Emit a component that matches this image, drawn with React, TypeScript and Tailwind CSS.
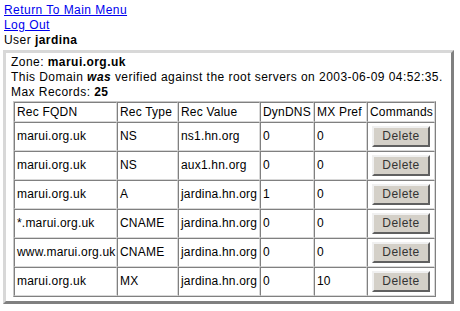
import React from "react";

const rows = [
  ["marui.org.uk", "NS", "ns1.hn.org", "0", "0"],
  ["marui.org.uk", "NS", "aux1.hn.org", "0", "0"],
  ["marui.org.uk", "A", "jardina.hn.org", "1", "0"],
  ["*.marui.org.uk", "CNAME", "jardina.hn.org", "0", "0"],
  ["www.marui.org.uk", "CNAME", "jardina.hn.org", "0", "0"],
  ["marui.org.uk", "MX", "jardina.hn.org", "0", "10"],
];

const widths = ["w-[103px]", "w-[61px]", "w-[82px]", "w-[54px]", "w-[53px]", "w-[68px]"];

const cell =
  "border border-t-[#808080] border-l-[#808080] border-r-[#d8d8d8] border-b-[#d8d8d8] pl-[2px] pr-0 py-0 text-left align-middle whitespace-nowrap";

export default function App() {
  return (
    <div
      className="bg-white text-black text-[12px] leading-[15px] tracking-[0.45px] pl-[4px] pt-[3px] w-[460px] h-[311px]"
      style={{ fontFamily: '"Liberation Sans", Arial, sans-serif' }}
    >
      <div>
        <a className="text-[#0000ee] underline" href="#">Return To Main Menu</a>
      </div>
      <div>
        <a className="text-[#0000ee] underline" href="#">Log Out</a>
      </div>
      <div>
        User <b>jardina</b>
      </div>
      <div className="mt-[2px] ml-[-1px] w-[451px] border-[3px] border-t-[#d8d8d8] border-l-[#d8d8d8] border-r-[#808080] border-b-[#808080] pt-[2px] pl-[5px] pb-[4px]">
        <div>
          Zone: <b>marui.org.uk</b>
        </div>
        <div>
          This Domain <i className="font-semibold">was</i> verified against the root servers on 2003-06-09 04:52:35.
        </div>
        <div>
          Max Records: <b>25</b>
        </div>
        <table className="table-fixed w-[423px] mt-[1px] ml-[2px] tracking-[0.2px] border-separate border-spacing-0 border border-t-[#c8c8c8] border-l-[#c8c8c8] border-r-[#808080] border-b-[#808080]">
          <colgroup>
            {widths.map((w, i) => (
              <col key={i} className={w} />
            ))}
          </colgroup>
          <thead>
            <tr className="h-[20px]">
              {["Rec FQDN", "Rec Type", "Rec Value", "DynDNS", "MX Pref", "Commands"].map((h) => (
                <td key={h} className={cell}>
                  {h}
                </td>
              ))}
            </tr>
          </thead>
          <tbody>
            {rows.map((r, ri) => (
              <tr key={ri} className="h-[29px]">
                {r.map((c, ci) => (
                  <td key={ci} className={cell}>
                    {c}
                  </td>
                ))}
                <td className="border border-t-[#808080] border-l-[#808080] border-r-[#d8d8d8] border-b-[#d8d8d8] px-0 py-0 align-middle text-center">
                  <button className="w-[58px] h-[21px] bg-[#d4d0c8] border-2 border-t-[#f0f0f0] border-l-[#f0f0f0] border-r-[#606060] border-b-[#606060] text-[12px] leading-[15px] tracking-[0.45px] text-[#333]">
                    Delete
                  </button>
                </td>
              </tr>
            ))}
          </tbody>
        </table>
      </div>
    </div>
  );
}
